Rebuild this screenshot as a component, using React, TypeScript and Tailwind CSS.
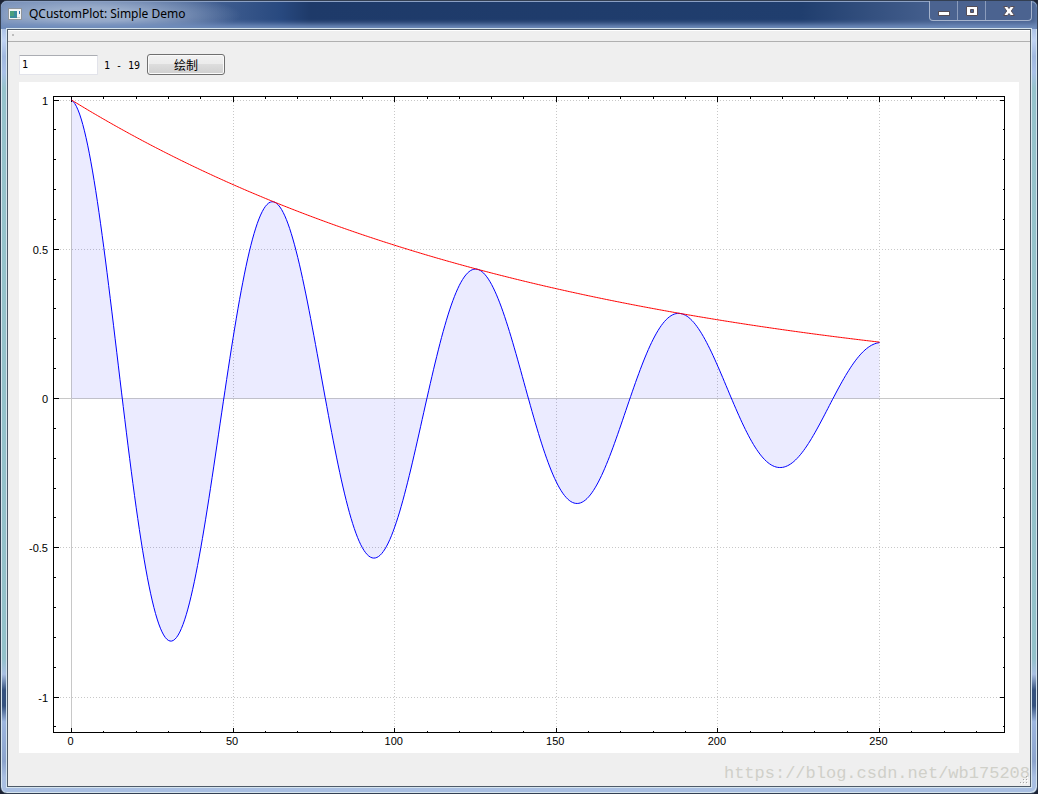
import { ReactNode } from "react";

const X0 = 52.5;
const Y0 = 316.5;
const SX = 3.232;
const SY = 298.5;
const LEFT = 34.5;
const RIGHT = 985.5;
const TOP = 14.5;
const BOTTOM = 650.5;

const px = (v: number) => X0 + v * SX;
const py = (v: number) => Y0 - v * SY;
const snap = (v: number) => Math.floor(v) + 0.5;

const samples = Array.from({ length: 501 }, (_, i) => i / 2);
const toPoints = (f: (x: number) => number) =>
  samples.map((x) => `${px(x).toFixed(2)},${py(f(x)).toFixed(2)}`).join(" ");

const envelope = toPoints((x) => Math.exp(-x / 150));
const wave = toPoints((x) => Math.exp(-x / 150) * Math.cos(x / 10));

const xMinor = Array.from({ length: 29 }, (_, i) => i * 10);
const xMajor = [0, 50, 100, 150, 200, 250];
const yMinor = Array.from({ length: 22 }, (_, i) => (i - 11) / 10);
const yMajor = [1, 0.5, 0, -0.5, -1];

function Plot() {
  return (
    <svg
      viewBox="0 0 1000 671"
      className="block w-full bg-white"
      role="img"
      aria-label="Decaying cosine with exponential envelope"
    >
      <g stroke="#c8c8c8" strokeWidth="1" shapeRendering="crispEdges">
        {xMajor.slice(1).map((v) => (
          <line key={v} x1={snap(px(v))} x2={snap(px(v))} y1={BOTTOM} y2={TOP} strokeDasharray="1 2" />
        ))}
        {yMajor.filter((v) => v !== 0).map((v) => (
          <line key={v} x1={LEFT} x2={RIGHT} y1={snap(py(v))} y2={snap(py(v))} strokeDasharray="1 2" />
        ))}
        <line x1={X0} x2={X0} y1={TOP} y2={BOTTOM} />
        <line x1={LEFT} x2={RIGHT} y1={Y0} y2={Y0} />
      </g>
      <polygon points={`${px(0)},${Y0} ${wave} ${px(250)},${Y0}`} fill="#0000ff" fillOpacity="0.08" />
      <g stroke="#000" strokeWidth="1" fill="none" shapeRendering="crispEdges">
        <rect x={LEFT} y={TOP} width={RIGHT - LEFT} height={BOTTOM - TOP} />
        {xMinor.map((v) => {
          const n = v % 50 === 0 ? 5 : 2;
          const x = snap(px(v));
          return <path key={v} d={`M${x} ${BOTTOM}v${-n}M${x} ${TOP}v${n}`} />;
        })}
        {yMinor.map((v) => {
          const n = yMajor.includes(v) ? 5 : 2;
          const y = snap(py(v));
          return <path key={v} d={`M${LEFT} ${y}h${n}M${RIGHT} ${y}h${-n}`} />;
        })}
      </g>
      <polyline points={wave} fill="none" stroke="#0000ff" strokeWidth="1" />
      <polyline points={envelope} fill="none" stroke="#ff0000" strokeWidth="1" />
      <g className="font-['Liberation_Sans',sans-serif] text-[11px]" fill="#000">
        {xMajor.map((v) => (
          <text key={v} x={px(v) - 1} y="663" textAnchor="middle">{v}</text>
        ))}
        {yMajor.map((v) => (
          <text key={v} x="29" y={snap(py(v)) + 4} textAnchor="end">{v}</text>
        ))}
      </g>
    </svg>
  );
}

function CaptionButton({ label, className, children }: { label: string; className: string; children: ReactNode }) {
  return (
    <button
      type="button"
      aria-label={label}
      className={`flex h-full items-center justify-center border-r border-[#8b9cbc] last:border-r-0 ${className}`}
    >
      {children}
    </button>
  );
}

function TitleBar() {
  return (
    <header className="flex h-7 items-start rounded-t-md bg-[radial-gradient(ellipse_150px_24px_at_90px_14px,#9db0cdee_30%,#8ea5c800_100%),linear-gradient(90deg,#6d87b3_0,#4a6697_190px,#28497f_280px,#1e3a69_310px,#203e6e_800px,#4a6492_950px)] pl-[7px] shadow-[inset_0_1px_0_#8ba0c4,inset_0_-5px_5px_#6f8cbb]">
      <svg viewBox="0 0 14 12" className="mt-[7px] h-3 w-3.5 shrink-0" aria-hidden="true">
        <rect width="14" height="12" fill="#8f959c" />
        <rect x="1" y="1" width="12" height="10" fill="#f4f4f4" />
        <rect x="2" y="3" width="7" height="7" fill="#3c8a9c" />
        <rect x="2" y="3" width="4" height="5" fill="#4b9e7c" />
        <rect x="11" y="3" width="1" height="3" fill="#2f6fb0" />
        <rect x="9" y="9" width="3" height="1" fill="#c9c9c9" />
      </svg>
      <h1 className="ml-[7px] mt-[5px] text-[12px] leading-4 text-black font-['Noto_Sans',sans-serif]">
        QCustomPlot: Simple Demo
      </h1>
      <div className="ml-auto mr-[5px] flex h-5 rounded-b border border-t-0 border-[#a5b3cc] bg-[#4b6390]">
        <CaptionButton label="Minimize" className="w-7">
          <svg viewBox="0 0 12 12" className="h-3 w-3"><rect x=".5" y="6.500" width="11" height="4" fill="#fff" stroke="#554e58" /></svg>
        </CaptionButton>
        <CaptionButton label="Maximize" className="w-7">
          <svg viewBox="0 0 12 12" className="h-3 w-3"><path fillRule="evenodd" d="M.5 1.500h11v9H.5zM4.500 4.500v3h3v-3z" fill="#fff" stroke="#554e58" /></svg>
        </CaptionButton>
        <CaptionButton label="Close" className="w-[45px]">
          <svg viewBox="0 0 12 12" className="h-3 w-3"><path d="M.5 1.500h4L6 3.500l1.500-2h4L8.300 6l3.200 4.500h-4L6 8.500l-1.500 2h-4L3.700 6z" fill="#fff" stroke="#554e58" /></svg>
        </CaptionButton>
      </div>
    </header>
  );
}

function SizeGrip() {
  return (
    <svg viewBox="0 0 9 9" className="absolute bottom-0.5 right-0.5 size-[9px]" shapeRendering="crispEdges" aria-hidden="true">
      <path d="M7 1h1v1H7zM4 4h1v1H4zM7 4h1v1H7zM1 7h1v1H1zM4 7h1v1H4zM7 7h1v1H7z" fill="#a5a5a5" />
      <path d="M8 2h1v1H8zM5 5h1v1H5zM8 5h1v1H8zM2 8h1v1H2zM5 8h1v1H5zM8 8h1v1H8z" fill="#fff" />
    </svg>
  );
}

export default function App() {
  return (
    <div className="flex min-h-screen flex-col bg-[#1b2233]">
      <div className="flex grow flex-col rounded-[7px] border border-[#333f52] bg-[linear-gradient(180deg,#7f9bc8_0,#c0d3f3_5%,#a0b8df_7%,#a9c0e8_9%,#96c3cc_11%,#93c1ca_83%,#a9bfe2_85%,#35527f_87%,#35527f_89%,#9db6df_91%,#8ba3cc_96%,#a9bfe2_98%)] shadow-[inset_1px_0_0_#d5e4ee,inset_-1px_-1px_0_#d5e4ee]">
        <TitleBar />
        <main className="relative mx-1.5 mb-1.5 flex grow flex-col border border-[#4e5a68] bg-[#efefef] shadow-[0_0_0_1px_#d5e4ee]">
          <div className="h-3 border-b border-[#b0b0b0] pl-1 pt-1 shadow-[inset_0_1px_0_#fff]">
            <div className="size-0.5 bg-[#bdbdbd]" />
          </div>
          <form className="flex items-center px-[11px] pt-3" onSubmit={(e) => e.preventDefault()}>
            <input id="mode" defaultValue="1" className="h-5 w-[79px] rounded-[1px] border border-[#e2e3ea] border-t-[#abadb3] bg-white px-0.5 text-[10px] font-['DejaVu_Sans_Mono',monospace]" />
            <label htmlFor="mode" className="ml-1.5 pt-0.5 text-[10px] font-['DejaVu_Sans_Mono',monospace]">1 - 19</label>
            <button type="submit" className="ml-[7px] h-[21px] w-[78px] rounded-[3px] border border-[#707070] bg-[linear-gradient(180deg,#f2f2f2_0,#ebebeb_50%,#dddddd_50%,#cfcfcf_100%)] text-[12px] leading-5 shadow-[inset_0_0_0_1px_#fafafa] font-['Noto_Sans_CJK_SC',sans-serif]">绘制</button>
          </form>
          <div className="mx-[11px] mt-[7px]"><Plot /></div>
          <footer className="flex grow items-end justify-end pb-0.5">
            <span className="text-[17px] leading-5 text-[#d0d0c9] font-['Liberation_Mono',monospace]">https://blog.csdn.net/wb175208</span>
            <SizeGrip />
          </footer>
        </main>
      </div>
    </div>
  );
}
